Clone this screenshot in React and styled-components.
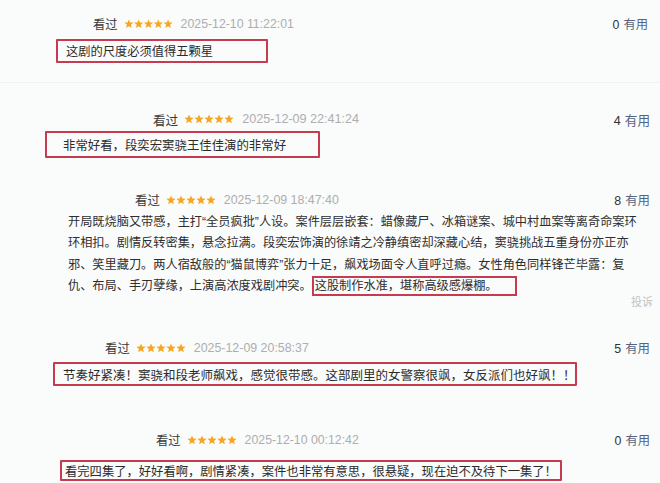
import React from "react";
import styled, { createGlobalStyle } from "styled-components";

const Global = createGlobalStyle`
  *, *::before, *::after { box-sizing: border-box; }
  html, body { margin: 0; padding: 0; background: #fafbfb; }
  body { font-family: "Liberation Sans", "Noto Sans CJK SC", sans-serif; color: #333; }
`;

const Page = styled.div`
  width: 660px;
  height: 483px;
  overflow: hidden;
  display: flex;
  flex-direction: column;
  background: #fafbfb;
`;

const Section = styled.section`
  width: 660px;
  height: ${(p) => p.$h}px;
  padding-top: ${(p) => p.$top}px;
  display: flex;
  flex-direction: column;
  flex: none;
  border-top: ${(p) => (p.$line ? "1px solid #f1f3f3" : "none")};
`;

const Header = styled.div`
  display: flex;
  align-items: center;
  width: 100%;
  height: 18px;
  padding-left: ${(p) => p.$indent}px;
  padding-right: ${(p) => p.$right}px;
  font-size: ${(p) => p.$size}px;
`;

const Watched = styled.span`
  flex: none;
  color: #3a3a3a;
  margin-right: 6px;
`;

const StarsSvg = styled.svg`
  flex: none;
  margin-right: 8px;
`;

const DateText = styled.span`
  flex: none;
  color: #aeaeae;
  white-space: nowrap;
`;

const Useful = styled.span`
  flex: none;
  margin-left: auto;
  color: #333;
  white-space: nowrap;
`;

const UsefulLabel = styled.span`
  color: #55647e;
  margin-left: 4px;
`;

const Boxed = styled.div`
  align-self: flex-start;
  margin-left: ${(p) => p.$left}px;
  margin-top: ${(p) => p.$mt}px;
  width: ${(p) => p.$w}px;
  height: ${(p) => p.$h}px;
  padding-left: ${(p) => p.$pad}px;
  border: 2px solid #c83a50;
  border-radius: 1px;
  display: flex;
  align-items: center;
  font-size: ${(p) => p.$size}px;
  color: #2b2b2b;
  white-space: nowrap;
`;

const Para = styled.div`
  margin-left: 68px;
  margin-top: 3px;
  font-size: 12.2px;
  line-height: 21.3px;
  color: #2e2e2e;
`;

const Line = styled.span`
  display: block;
  white-space: nowrap;
`;

const Mark = styled.span`
  border: 2px solid #c83a50;
  padding: 1px 17px 1px 1px;
`;

const Report = styled.div`
  align-self: flex-end;
  margin-right: 7px;
  font-size: 11px;
  line-height: 10px;
  color: #c4c4c4;
`;

function Stars({ w = 50 }) {
  const star = "5,0.4 6.3,3.5 9.6,3.7 7,5.9 7.9,9.3 5,7.5 2.1,9.3 3,5.9 0.4,3.7 3.7,3.5";
  return (
    <StarsSvg width={w} height={w / 5} viewBox="0 0 50 10">
      {[0, 1, 2, 3, 4].map((i) => (
        <polygon key={i} points={star} transform={`translate(${i * 10},0)`} fill="#f6a623" />
      ))}
    </StarsSvg>
  );
}

function Meta({ indent, right, size, date, count, starW }) {
  return (
    <Header $indent={indent} $right={right} $size={size}>
      <Watched>看过</Watched>
      <Stars w={starW} />
      <DateText>{date}</DateText>
      <Useful>
        {count}
        <UsefulLabel>有用</UsefulLabel>
      </Useful>
    </Header>
  );
}

export default function App() {
  return (
    <Page>
      <Global />
      <Section $h={82} $top={15}>
        <Meta indent={93} right={12} size={12.3} date="2025-12-10 11:22:01" count="0" starW={49} />
        <Boxed $left={56} $mt={6} $w={212} $h={24} $pad={8} $size={12.25}>
          这剧的尺度必须值得五颗星
        </Boxed>
      </Section>

      <Section $h={93} $top={27} $line>
        <Meta indent={153} right={10} size={12.6} date="2025-12-09 22:41:24" count="4" starW={50} />
        <Boxed $left={45} $mt={3} $w={275} $h={27} $pad={16} $size={12.4}>
          非常好看，段奕宏窦骁王佳佳演的非常好
        </Boxed>
      </Section>

      <Section $h={145} $top={16}>
        <Meta indent={135} right={10} size={12.4} date="2025-12-09 18:47:40" count="8" starW={50} />
        <Para>
          <Line>开局既烧脑又带感，主打“全员疯批”人设。案件层层嵌套：蜡像藏尸、冰箱谜案、城中村血案等离奇命案环</Line>
          <Line>环相扣。剧情反转密集，悬念拉满。段奕宏饰演的徐靖之冷静缜密却深藏心结，窦骁挑战五重身份亦正亦</Line>
          <Line>邪、笑里藏刀。两人宿敌般的“猫鼠博弈”张力十足，飙戏场面令人直呼过瘾。女性角色同样锋芒毕露：复</Line>
          <Line>
            仇、布局、手刃孽缘，上演高浓度戏剧冲突。<Mark>这股制作水准，堪称高级感爆棚。</Mark>
          </Line>
        </Para>
        <Report>投诉</Report>
      </Section>

      <Section $h={95} $top={19}>
        <Meta indent={105} right={10} size={12.4} date="2025-12-09 20:58:37" count="5" starW={50} />
        <Boxed $left={53} $mt={5} $w={524} $h={24} $pad={8} $size={12.5}>
          节奏好紧凑！窦骁和段老师飙戏，感觉很带感。这部剧里的女警察很飒，女反派们也好飒！！
        </Boxed>
      </Section>

      <Section $h={68} $top={16}>
        <Meta indent={156} right={10} size={12.3} date="2025-12-10 00:12:42" count="0" starW={50} />
        <Boxed $left={60} $mt={11} $w={502} $h={21} $pad={3} $size={12.3}>
          看完四集了，好好看啊，剧情紧凑，案件也非常有意思，很悬疑，现在迫不及待下一集了！
        </Boxed>
      </Section>
    </Page>
  );
}
